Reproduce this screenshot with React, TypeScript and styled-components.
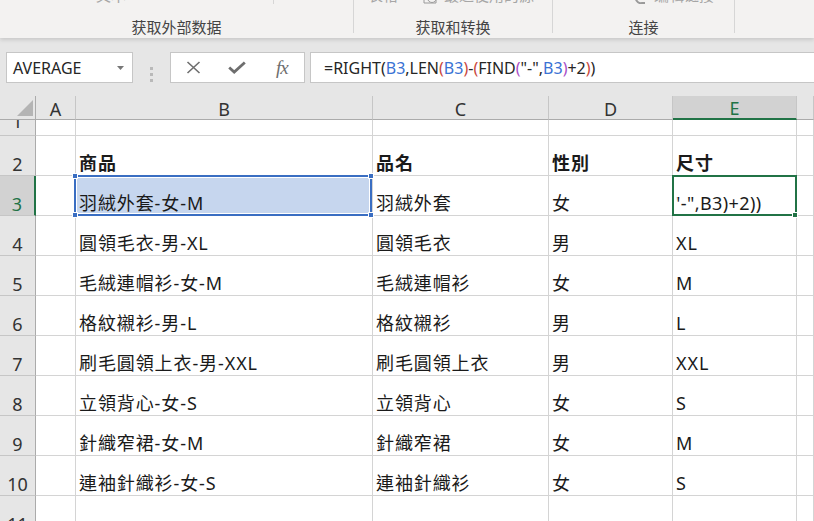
import React from 'react';
import styled, { createGlobalStyle } from 'styled-components';

const GREEN = '#217346';
const GRID = '#d4d4d4';
const HEAD_BG = '#e6e6e6';
const HEAD_ACTIVE = '#d2d2d2';

const GlobalStyle = createGlobalStyle`
  html, body {
    margin: 0;
    padding: 0;
    background: #fff;
    overflow: hidden;
  }
  * {
    box-sizing: border-box;
  }
`;

const Window = styled.div`
  width: 814px;
  height: 521px;
  overflow: hidden;
  display: flex;
  flex-direction: column;
  background: ${HEAD_BG};
`;

/* ---------- ribbon (scrolled so only the group captions show) ---------- */

const Ribbon = styled.div`
  flex: none;
  height: 38px;
  display: flex;
  align-items: flex-start;
  background: #f3f2f1;
  box-shadow: 0 2px 4px rgba(0, 0, 0, 0.13);
  position: relative;
  z-index: 1;
`;

const RibbonGroup = styled.div<{ $width?: number }>`
  flex: ${({ $width }) => ($width ? 'none' : '1')};
  width: ${({ $width }) => ($width ? `${$width}px` : 'auto')};
  height: 38px;
  display: flex;
  flex-direction: column;
`;

const RibbonDivider = styled.div`
  flex: none;
  width: 1px;
  height: 33px;
  background: #d6d6d6;
`;

const GroupBody = styled.div<{ $pad: number }>`
  height: 5px;
  overflow: hidden;
  display: flex;
  align-items: flex-end;
  padding-left: ${({ $pad }) => $pad}px;
`;

const CutLabel = styled.span<{ $ml?: number }>`
  flex: none;
  margin-left: ${({ $ml }) => $ml ?? 0}px;
  font: 15px/20px 'Noto Sans CJK SC', sans-serif;
  color: #a6a6a6;
  white-space: nowrap;
`;

const CutIcon = styled.svg<{ $ml?: number }>`
  flex: none;
  margin-left: ${({ $ml }) => $ml ?? 0}px;
  margin-bottom: 1px;
`;

const InnerDivider = styled.div<{ $ml: number }>`
  flex: none;
  align-self: flex-start;
  margin-left: ${({ $ml }) => $ml}px;
  width: 1px;
  height: 4px;
  background: #d6d6d6;
`;

const GroupLabel = styled.div`
  flex: 1;
  display: flex;
  align-items: flex-end;
  justify-content: center;
  padding-bottom: 1px;
  font: 15px/20px 'Noto Sans CJK SC', sans-serif;
  color: #444;
`;

/* ---------- formula bar ---------- */

const FormulaBar = styled.div`
  flex: none;
  height: 58px;
  display: flex;
  align-items: flex-start;
  padding: 14px 0 0 6px;
  background: ${HEAD_BG};
`;

const NameBox = styled.div`
  flex: none;
  width: 127px;
  height: 31px;
  display: flex;
  align-items: center;
  padding: 0 8px 0 6px;
  background: #fff;
  border: 1px solid #c6c6c6;
  font: 16px 'Noto Sans', sans-serif;
  color: #262626;
`;

const Caret = styled.svg`
  margin-left: auto;
`;

const Grip = styled.div`
  flex: none;
  align-self: center;
  margin: 0 17px;
  display: flex;
  flex-direction: column;
  gap: 3px;

  & span {
    width: 3px;
    height: 3px;
    background: #b9b9b9;
  }
`;

const ButtonBox = styled.div`
  flex: none;
  width: 135px;
  height: 31px;
  display: flex;
  background: #fff;
  border: 1px solid #c6c6c6;
`;

const BarButton = styled.div`
  flex: 1;
  display: flex;
  align-items: center;
  justify-content: center;
  color: #6e6e6e;
`;

const Fx = styled.span`
  font: italic 19px/20px 'Liberation Serif', serif;
  color: #6e6e6e;
  letter-spacing: -1px;
`;

const FormulaInput = styled.div`
  flex: 1;
  margin-left: 5px;
  height: 31px;
  display: flex;
  align-items: center;
  padding-left: 13px;
  background: #fff;
  border: 1px solid #c6c6c6;
  border-right: none;
  font: 16px 'Noto Sans', sans-serif;
  color: #262626;
  white-space: nowrap;
`;

const Tok = styled.span<{ $c?: string }>`
  color: ${({ $c }) => $c ?? 'inherit'};
`;

/* ---------- sheet ---------- */

const Sheet = styled.div`
  flex: 1;
  overflow: hidden;
  display: grid;
  grid-template-columns: 36px 40px 297px 176px 124px 124px 1fr;
  grid-template-rows: 24px 16px repeat(10, 40px);
  background: #fff;
`;

const Corner = styled.div`
  display: flex;
  align-items: flex-end;
  justify-content: flex-end;
  padding: 0 2px 3px 0;
  background: ${HEAD_BG};
  border-right: 1px solid #ababab;
  border-bottom: 1px solid #ababab;
`;

const ColHeader = styled.div<{ $active?: boolean }>`
  display: flex;
  align-items: flex-end;
  justify-content: center;
  background: ${({ $active }) => ($active ? HEAD_ACTIVE : HEAD_BG)};
  border-right: 1px solid #c6c6c6;
  border-bottom: ${({ $active }) =>
    $active ? `2px solid ${GREEN}` : '1px solid #ababab'};
  font: 18px/20px 'Noto Sans', sans-serif;
  color: ${({ $active }) => ($active ? GREEN : '#333')};
`;

const RowHeader = styled.div<{ $active?: boolean; $short?: boolean }>`
  display: flex;
  align-items: flex-end;
  justify-content: center;
  overflow: hidden;
  padding-bottom: ${({ $short }) => ($short ? 3 : 0)}px;
  background: ${({ $active }) => ($active ? HEAD_ACTIVE : HEAD_BG)};
  border-right: ${({ $active }) =>
    $active ? `2px solid ${GREEN}` : '1px solid #ababab'};
  border-bottom: 1px solid #c6c6c6;
  font: 18px/22px 'Noto Sans', sans-serif;
  color: ${({ $active }) => ($active ? GREEN : '#333')};
`;

const Cell = styled.div<{ $bold?: boolean; $ref?: boolean }>`
  position: relative;
  display: flex;
  align-items: flex-end;
  padding-left: 3px;
  min-width: 0;
  background: ${({ $ref }) => ($ref ? '#c6d6ee' : '#fff')};
  border-right: 1px solid ${GRID};
  border-bottom: 1px solid ${GRID};
  font: ${({ $bold }) => ($bold ? 700 : 400)} 18px/24px 'Noto Sans',
    'Noto Sans CJK TC', sans-serif;
  letter-spacing: 0.9px;
  color: #1a1a1a;
  white-space: nowrap;
`;

const RefFrame = styled.div`
  position: absolute;
  left: -2px;
  top: -1px;
  right: 0;
  bottom: -1px;
  border: 2px solid #3a6ec2;
  box-shadow: inset 0 0 0 1px #fff;
  z-index: 2;
  pointer-events: none;
`;

const Handle = styled.span<{ $x: 'left' | 'right'; $y: 'top' | 'bottom' }>`
  position: absolute;
  ${({ $x }) => ($x === 'left' ? 'left: -4px;' : 'right: -4px;')}
  ${({ $y }) => ($y === 'top' ? 'top: -4px;' : 'bottom: -4px;')}
  width: 6px;
  height: 6px;
  background: #3a6ec2;
  border: 1px solid #fff;
`;

const ActiveFrame = styled.div`
  position: absolute;
  left: -1px;
  top: -1px;
  right: -1px;
  bottom: -1px;
  border: 2px solid ${GREEN};
  z-index: 2;
  pointer-events: none;
`;

const FillHandle = styled.span`
  position: absolute;
  right: -3px;
  bottom: -4px;
  width: 6px;
  height: 6px;
  background: ${GREEN};
  border: 1px solid #fff;
`;

const Editor = styled.div`
  width: 100%;
  overflow: hidden;
  padding-left: 1px;
  font-family: 'Noto Sans', sans-serif;
  letter-spacing: 0.4px;
`;

const EditText = styled.span`
  display: inline-block;
  margin-left: -4px;
`;

const table: { n: number; cells: string[] }[] = [
  { n: 2, cells: ['商品', '品名', '性別', '尺寸'] },
  { n: 3, cells: ['羽絨外套-女-M', '羽絨外套', '女', ''] },
  { n: 4, cells: ['圓領毛衣-男-XL', '圓領毛衣', '男', 'XL'] },
  { n: 5, cells: ['毛絨連帽衫-女-M', '毛絨連帽衫', '女', 'M'] },
  { n: 6, cells: ['格紋襯衫-男-L', '格紋襯衫', '男', 'L'] },
  { n: 7, cells: ['刷毛圓領上衣-男-XXL', '刷毛圓領上衣', '男', 'XXL'] },
  { n: 8, cells: ['立領背心-女-S', '立領背心', '女', 'S'] },
  { n: 9, cells: ['針織窄裙-女-M', '針織窄裙', '女', 'M'] },
  { n: 10, cells: ['連袖針織衫-女-S', '連袖針織衫', '女', 'S'] },
];

const REF = '#3a72d4';
const P2 = '#c9473d';
const P3 = '#a94dc6';

const formula: [string, string?][] = [
  ['=RIGHT('],
  ['B3', REF],
  [',LEN'],
  ['(', P2],
  ['B3', REF],
  [')', P2],
  ['-'],
  ['(', P2],
  ['FIND'],
  ['(', P3],
  ['"-",'],
  ['B3', REF],
  [')', P3],
  ['+2'],
  [')', P2],
  [')'],
];

const columns = ['A', 'B', 'C', 'D', 'E', ''];

export default function App() {
  return (
    <>
      <GlobalStyle />
      <Window>
        <Ribbon>
          <RibbonGroup $width={353}>
            <GroupBody $pad={96}>
              <CutLabel>文本</CutLabel>
              <InnerDivider $ml={147} />
            </GroupBody>
            <GroupLabel>获取外部数据</GroupLabel>
          </RibbonGroup>
          <RibbonDivider />
          <RibbonGroup $width={198}>
            <GroupBody $pad={14}>
              <CutLabel>表格</CutLabel>
              <CutIcon $ml={24} width="18" height="18" viewBox="0 0 18 18">
                <path d="M2 1h8l4 4v12H2z" fill="none" stroke="#9a9a9a" />
                <circle cx="10" cy="12" r="4.5" fill="#f3f2f1" stroke="#9a9a9a" />
                <path d="M10 9.5V12h2" fill="none" stroke="#9a9a9a" />
              </CutIcon>
              <CutLabel $ml={4}>最近使用的源</CutLabel>
            </GroupBody>
            <GroupLabel>获取和转换</GroupLabel>
          </RibbonGroup>
          <RibbonDivider />
          <RibbonGroup $width={181}>
            <GroupBody $pad={81}>
              <CutIcon width="17" height="18" viewBox="0 0 17 18">
                <path
                  d="M3 9a5 5 0 0 0 5 8h3M14 9a5 5 0 0 0-5-8H6"
                  fill="none"
                  stroke="#9a9a9a"
                  strokeWidth="2"
                />
              </CutIcon>
              <CutLabel $ml={3}>编辑链接</CutLabel>
            </GroupBody>
            <GroupLabel>连接</GroupLabel>
          </RibbonGroup>
          <RibbonDivider />
          <RibbonGroup />
        </Ribbon>

        <FormulaBar>
          <NameBox>
            AVERAGE
            <Caret width="7" height="4" viewBox="0 0 7 4">
              <path d="M0 0h7L3.5 4z" fill="#777" />
            </Caret>
          </NameBox>
          <Grip>
            <span />
            <span />
            <span />
          </Grip>
          <ButtonBox>
            <BarButton>
              <svg width="15" height="13" viewBox="0 0 15 13">
                <path
                  d="M1.5 1L13.5 12M13.5 1L1.5 12"
                  stroke="#6e6e6e"
                  strokeWidth="1.6"
                />
              </svg>
            </BarButton>
            <BarButton>
              <svg width="18" height="13" viewBox="0 0 18 13">
                <path
                  d="M1.2 6.5L6.2 11L16.8 1.5"
                  fill="none"
                  stroke="#6e6e6e"
                  strokeWidth="2.8"
                />
              </svg>
            </BarButton>
            <BarButton>
              <Fx>fx</Fx>
            </BarButton>
          </ButtonBox>
          <FormulaInput>
            {formula.map(([t, c], i) => (
              <Tok key={i} $c={c}>
                {t}
              </Tok>
            ))}
          </FormulaInput>
        </FormulaBar>

        <Sheet>
          {/* Column headers */}
          <Corner>
            <svg width="16" height="16" viewBox="0 0 16 16">
              <path d="M16 0v16H0z" fill="#b4b4b4" />
            </svg>
          </Corner>
          {columns.map((c) => (
            <ColHeader key={c || 'F'} $active={c === 'E'}>
              {c}
            </ColHeader>
          ))}

          {/* Row 1, mostly scrolled away */}
          <RowHeader $short>1</RowHeader>
          {columns.map((c) => (
            <Cell key={`1${c}`} />
          ))}

          {table.map((row) => (
            <React.Fragment key={row.n}>
              <RowHeader $active={row.n === 3}>{row.n}</RowHeader>
              <Cell />
              {row.cells.map((text, i) => {
                if (row.n === 3 && i === 0) {
                  return (
                    <Cell key={i} $ref>
                      {text}
                      <RefFrame>
                        <Handle $x="left" $y="top" />
                        <Handle $x="right" $y="top" />
                        <Handle $x="left" $y="bottom" />
                        <Handle $x="right" $y="bottom" />
                      </RefFrame>
                    </Cell>
                  );
                }
                if (row.n === 3 && i === 3) {
                  return (
                    <Cell key={i}>
                      <Editor>
                        <EditText>"-",B3)+2))</EditText>
                      </Editor>
                      <ActiveFrame>
                        <FillHandle />
                      </ActiveFrame>
                    </Cell>
                  );
                }
                return (
                  <Cell key={i} $bold={row.n === 2}>
                    {text}
                  </Cell>
                );
              })}
              <Cell />
            </React.Fragment>
          ))}

          <RowHeader>11</RowHeader>
          {columns.map((c) => (
            <Cell key={`11${c}`} />
          ))}
        </Sheet>
      </Window>
    </>
  );
}
